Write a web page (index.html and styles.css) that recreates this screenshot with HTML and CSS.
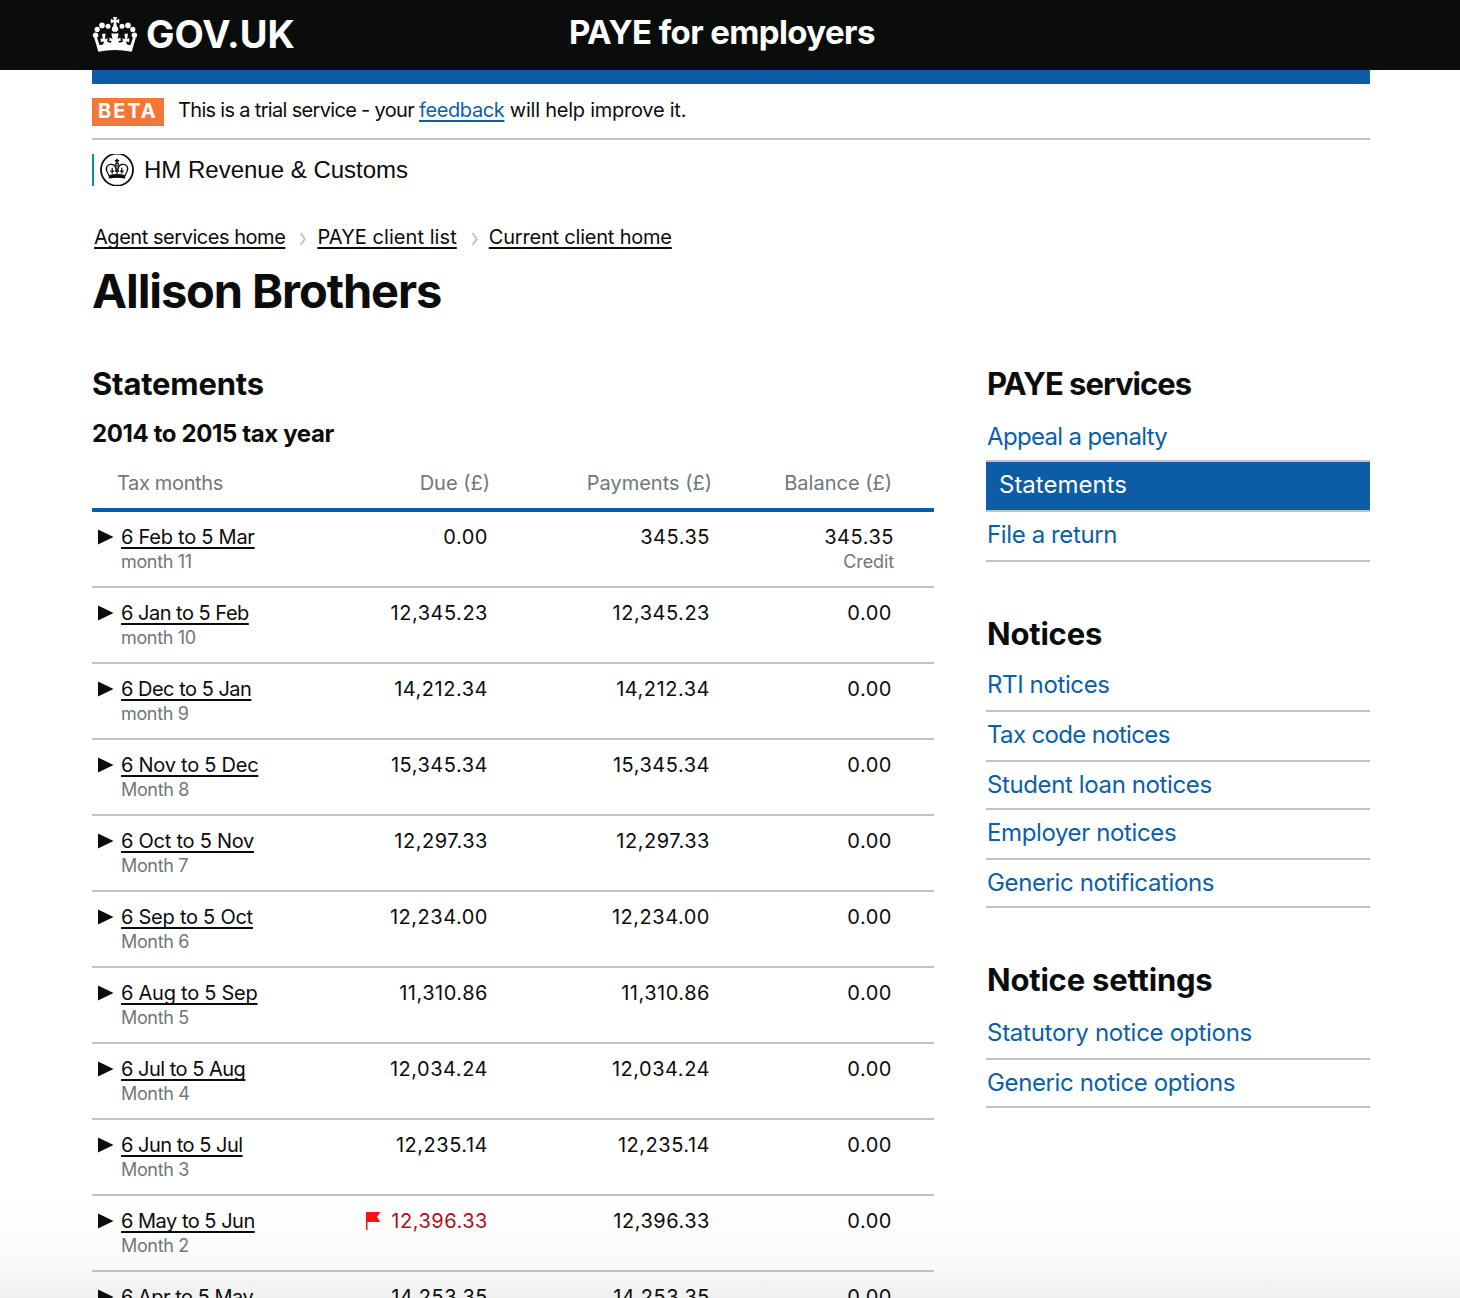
FILE: index.html
```html
<!DOCTYPE html>
<html lang="en">
<head>
<meta charset="utf-8">
<title>PAYE for employers</title>
<link rel="stylesheet" href="styles.css">
</head>
<body>
<header class="header">
  <div class="wrap header-inner">
    <a class="logo" href="#">
      <svg class="crown" viewBox="0 0 46 36" aria-hidden="true">
        <g fill="currentColor">
          <circle cx="3.600" cy="18.200" r="2.700"/><circle cx="5.200" cy="12.400" r="2.600"/><circle cx="10" cy="8.400" r="2.800"/><circle cx="16" cy="9.300" r="2.500"/>
          <circle cx="42.400" cy="18.200" r="2.700"/><circle cx="40.800" cy="12.400" r="2.600"/><circle cx="36" cy="8.400" r="2.800"/><circle cx="30" cy="9.300" r="2.500"/>
          <path d="M21.900 4.900 18.800 6.600V1.800l3.100 1.700L21 0h4l-.9 3.500 3.100-1.700v4.800l-3.100-1.700.7 4.300c2 1.400 2 4.300 0 5.600h-3.600c-2-1.300-2-4.200 0-5.600Z"/>
          <path d="M2.300 21 5 20.600l2.400 7.200q2.800 1 4.100-1.400.6-1.200 0-1.900-1.300-.3-2.600 1l-.4-4.300 2.300.9L10 16.800h3.600l-.7 5.500 2.700-1.100-.4 3.700 1.200.2q2 1.600 3.300-.7-1-.9-2.400-.3l.2-3.500 3 1.500-1.200-5.600h7.400l-1.200 5.600 3-1.500.2 3.500q-1.400-.6-2.400.3 1.300 2.300 3.300.7l1.200-.2-.4-3.700 2.700 1.100-.7-5.500H36l-.8 5.300 2.300-.9-.4 4.300q-1.300-1.300-2.600-1-.6.700 0 1.900 1.300 2.400 4.100 1.400L41 20.600l2.700.4L39.700 34.800Q23 31 6.300 34.800Z"/>
        </g>
      </svg>
      <span class="logo-text">GOV.UK</span>
    </a>
    <span class="service">PAYE for employers</span>
  </div>
</header>
<main class="wrap">
  <div class="bar"></div>
  <div class="phase"><strong class="tag">BETA</strong><span class="phase-text"><span class="lead">This is a trial service - your </span><a href="#">feedback</a><span class="tail"> will help improve it.</span></span></div>
  <div class="org">
    <svg class="crest" viewBox="0 1.300 34 32" aria-hidden="true"><circle cx="17" cy="17" r="16" fill="none" stroke="currentColor" stroke-width="1.800"/>
      <g fill="none" stroke="currentColor" stroke-width="1.200"><path d="M9.300 23.500 6.900 18.500c-2-4.500 1.500-7.500 5-6.800 3 .6 4.300 3.300 4.300 7.300M24.700 23.500l2.400-5c2-4.500-1.500-7.500-5-6.800-3 .6-4.300 3.300-4.300 7.300"/><path d="M17 6v5.500M14.800 8h4.400" stroke-width="1.600"/><circle cx="17" cy="12" r="1.500"/><path d="M9.500 22.800q7.500-1.600 15 0v2.400q-7.500-1.400-15 0z" fill="currentColor"/><path d="M12.200 15v6M10.200 18.500h4M21.800 15v6M19.800 18.500h4M17 14.500v7M15 18.500h4"/></g></svg>
    <span class="org-name">HM Revenue &amp; Customs</span>
  </div>
  <nav class="crumbs">
    <a href="#" class="agent">Agent services home</a>
    <svg class="chev" viewBox="0 0 8 14" aria-hidden="true"><path d="M1.500 1 5.800 7 1.500 13"/></svg>
    <a href="#" class="list">PAYE client list</a>
    <svg class="chev" viewBox="0 0 8 14" aria-hidden="true"><path d="M1.500 1 5.800 7 1.500 13"/></svg>
    <a href="#" class="client">Current client home</a>
  </nav>
  <h1>Allison Brothers</h1>
  <div class="columns">
    <section class="statements">
      <h2>Statements</h2>
      <h3>2014 to 2015 tax year</h3>
      <table>
        <colgroup><col class="col-month"><col class="col-due"><col class="col-pay"><col class="col-bal"></colgroup>
        <thead><tr><th>Tax months</th><th>Due (£)</th><th>Payments (£)</th><th>Balance (£)</th></tr></thead>
        <tbody id="rows"></tbody>
      </table>
    </section>
    <aside>
      <h2 class="narrow">PAYE services</h2>
      <ul><li class="short"><a href="#" class="tight">Appeal a penalty</a></li><li class="current"><a href="#">Statements</a></li><li><a href="#">File a return</a></li></ul>
      <h2>Notices</h2>
      <ul class="notices"><li><a href="#">RTI notices</a></li><li><a href="#" class="tight">Tax code notices</a></li><li class="short"><a href="#">Student loan notices</a></li><li><a href="#">Employer notices</a></li><li class="short"><a href="#">Generic notifications</a></li></ul>
      <h2>Notice settings</h2>
      <ul><li><a href="#" class="loose">Statutory notice options</a></li><li class="short"><a href="#">Generic notice options</a></li></ul>
    </aside>
  </div>
</main>
<script src="rows.js"></script>
</body>
</html>
```
FILE: styles.css
```css
* { box-sizing: border-box; }
html { background: #fff; }
body { margin: 0; height: 1298px; overflow: hidden; color: #0b0c0c; font: 20px/28px Inter, "Noto Sans", sans-serif; background: linear-gradient(#fff 1190px, #fbfbfb 1255px, #f0f0f0 1298px); }
a { color: #0b5fa8; }
.wrap { width: 1278px; margin: 0 0 0 92px; }
.header { height: 70px; background: #0b0c0c; color: #fff; }
.header-inner { display: flex; height: 70px; }
.logo { display: flex; width: 477px; color: #fff; text-decoration: none; }
.crown { width: 46px; height: 36px; margin-top: 17px; }
.logo-text { margin-left: 8px; font-size: 38px; font-weight: 700; line-height: 68px; letter-spacing: 0; }
.service { font-size: 33px; font-weight: 700; line-height: 65px; letter-spacing: -.6px; }
.bar { height: 14px; background: #0c5da5; }
.phase { display: flex; height: 56px; padding-top: 14px; border-bottom: 2px solid #bfc1c3; }
.tag { width: 72px; height: 28px; padding-left: 6px; background: #f47738; color: #fff; font-weight: 700; line-height: 27px; letter-spacing: 1.900px; }
.phase-text { margin-left: 14px; line-height: 25px; }
.phase-text .lead { letter-spacing: -.68px; }
.phase-text a { letter-spacing: -.38px; }
.phase-text .tail { letter-spacing: -.24px; }
.phase-text a, .crumbs a, .period { text-decoration: underline; text-decoration-thickness: 2px; text-underline-offset: 3px; text-decoration-skip-ink: none; }
.org { display: flex; height: 32px; margin-top: 14px; padding-left: 6px; border-left: 2px solid #009390; }
.crest { width: 34px; height: 32px; }
.org-name { margin-left: 10px; font: 24px/32px "Liberation Sans", Arial, sans-serif; }
.crumbs { display: flex; margin-top: 37px; padding-left: 2px; }
.crumbs a, .period { color: inherit; }
.crumbs .agent { letter-spacing: -.46px; }
.crumbs .list { letter-spacing: .06px; }
.crumbs .client { letter-spacing: -.2px; }
.chev { width: 8px; height: 14px; margin: 9px 10px 0 14px; fill: none; stroke: #bfc1c3; stroke-width: 1.800px; }
h1, h2, h3 { margin: 0; font-weight: 700; }
h1 { margin-top: 12px; font-size: 47px; line-height: 56px; letter-spacing: -1.1px; }
h2 { padding-top: 2px; font-size: 31px; line-height: 40px; height: 40px; letter-spacing: -.2px; }
h2.narrow { letter-spacing: -1px; }
h3 { height: 30px; margin-top: 16px; font-size: 24px; line-height: 32px; letter-spacing: -.38px; }
.columns { display: flex; justify-content: space-between; margin-top: 43px; }
.statements { width: 842px; }
table { width: 842px; border-collapse: separate; border-spacing: 0; table-layout: fixed; }
.col-month { width: 240px; }
.col-due { width: 158px; }
.col-pay { width: 222px; }
.col-bal { width: 222px; }
th { height: 64px; padding: 21px 0 11px; border-bottom: 4px solid #0c5da5; color: #6f777b; font-weight: 400; text-align: right; line-height: 28px; }
th:first-child { padding-left: 25px; text-align: left; letter-spacing: -.35px; }
td { height: 76px; padding: 12px 2px 12px 0; border-bottom: 2px solid #bfc1c3; text-align: right; vertical-align: top; line-height: 26px; letter-spacing: .52px; }
td:first-child { padding: 12px 0 12px 29px; text-align: left; letter-spacing: -.25px; }
td:first-child .tight { letter-spacing: -.5px; }
th:last-child { padding-right: 42px; }
td:last-child { padding-right: 42px; }
td.credit { padding-right: 40px; }
.period { display: inline-block; position: relative; }
.arrow { position: absolute; left: -23px; top: 5px; width: 16px; height: 16px; }
.small { display: block; color: #6f777b; font-size: 18px; line-height: 24px; letter-spacing: -.35px; }
.credit .small { letter-spacing: -.1px; }
.late { color: #b10e1e; }
.flag { width: 15px; height: 18px; margin-right: 10px; vertical-align: -2px; }
aside { width: 384px; }
aside h2 { padding-left: 1px; }
aside ul { margin: 12px 0 50px; padding: 0; list-style: none; font-size: 24px; line-height: 30px; letter-spacing: -.38px; }
aside .notices { margin-top: 10px; }
li { height: 50px; padding: 8px 0 0 1px; border-bottom: 2px solid #bfc1c3; }
li.short { height: 48px; }
li a { text-decoration: none; }
li .tight { letter-spacing: -.66px; }
li .loose { letter-spacing: -.26px; }
li.current { padding-left: 13px; background: #0c5da5; background-clip: padding-box; letter-spacing: 0; }
li.current a { color: #fff; }
```
FILE: rows.js
```js
const rows = [
  ["6 Feb to 5 Mar", "month 11", "0.00", "345.35"],
  ["6 Jan to 5 Feb", "month 10", "12,345.23", "12,345.23"],
  ["6 Dec to 5 Jan", "month 9", "14,212.34", "14,212.34"],
  ["6 Nov to 5 Dec", "Month 8", "15,345.34", "15,345.34"],
  ["6 Oct to 5 Nov", "Month 7", "12,297.33", "12,297.33"],
  ["6 Sep to 5 Oct", "Month 6", "12,234.00", "12,234.00"],
  ["6 Aug to 5 Sep", "Month 5", "11,310.86", "11,310.86"],
  ["6 Jul to 5 Aug", "Month 4", "12,034.24", "12,034.24"],
  ["6 Jun to 5 Jul", "Month 3", "12,235.14", "12,235.14"],
  ["6 May to 5 Jun", "Month 2", "12,396.33", "12,396.33"],
  ["6 Apr to 5 May", "Month 1", "14,253.35", "14,253.35"]
];
const arrow = '<svg class="arrow" viewBox="0 0 16 16"><path fill="#0b0c0c" d="M0 .5 15.500 8 0 15.500Z"/></svg>';
const flag = '<svg class="flag" viewBox="0 0 15 18"><path fill="#ff0f1a" d="M0 0h14.500L11 5l3.500 5H1.500v8H0Z"/></svg>';
document.getElementById("rows").innerHTML = rows.map(([period, month, due, paid], i) => `<tr>
  <td><a class="period${/J|May/.test(period) ? " tight" : ""}">${arrow}${period}</a><span class="small">${month}</span></td>
  <td${i === 9 ? ' class="late"' : ""}>${i === 9 ? flag : ""}${due}</td>
  <td>${paid}</td>
  <td${i === 0 ? ' class="credit"' : ""}>${i === 0 ? '345.35<span class="small">Credit</span>' : "0.00"}</td></tr>`).join("");
```
